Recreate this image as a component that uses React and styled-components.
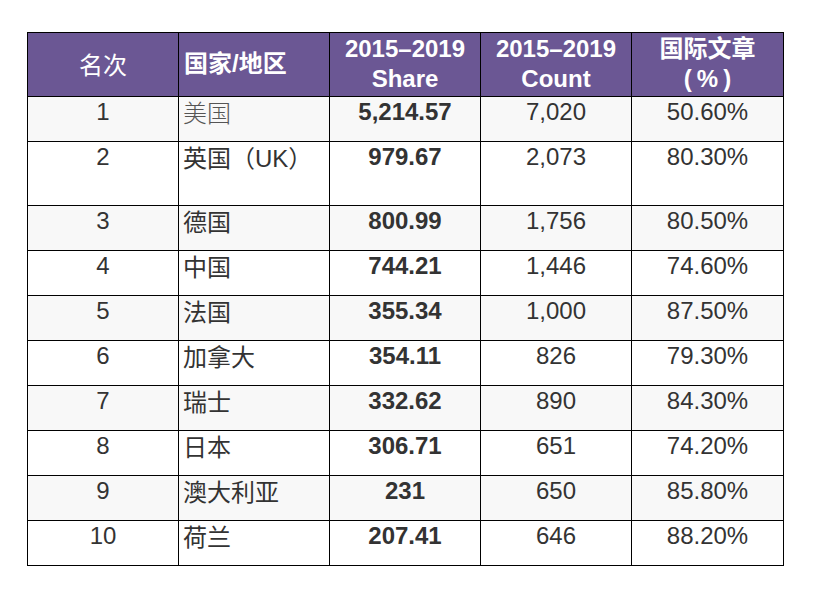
import React from "react";
import styled, { createGlobalStyle } from "styled-components";

const Global = createGlobalStyle`
  html, body { margin: 0; padding: 0; background: #ffffff; }
  body { font-family: "Liberation Sans", Arial, "Noto Sans CJK SC", sans-serif; }
`;

const Page = styled.div`
  padding: 32px 0 0 27px;
`;

const Table = styled.table`
  border-collapse: collapse;
  table-layout: fixed;
  width: 756px;
  font-family: "Liberation Sans", Arial, "Noto Sans CJK SC", sans-serif;
  font-size: 24px;
  color: #333333;
`;

const HeadRow = styled.tr`
  height: 64px;
  background: #6b5794;
`;

const Th = styled.th`
  border: 1px solid #000;
  padding: 0 2px 2px;
  color: #ffffff;
  font-weight: ${(p) => (p.$light ? 400 : 700)};
  font-family: ${(p) =>
    p.$light
      ? '"Noto Sans CJK SC", serif'
      : '"Liberation Sans", Arial, "Noto Sans CJK SC", sans-serif'};
  text-align: ${(p) => (p.$left ? "left" : "center")};
  padding-left: ${(p) => (p.$left ? "5px" : "2px")};
  line-height: 30px;
  vertical-align: middle;
`;

const Spaced = styled.span`
  letter-spacing: 5px;
  padding-left: 5px;
`;

const Row = styled.tr`
  height: ${(p) => (p.$tall ? "64px" : "45px")};
  background: ${(p) => (p.$odd ? "#f8f8f8" : "#ffffff")};
`;

const Td = styled.td`
  border: 1px solid #000;
  padding: 0 2px 0;
  line-height: 30px;
  vertical-align: top;
  text-align: center;
`;

const NameCell = styled(Td)`
  text-align: left;
  padding-left: 4px;
  font-family: "Noto Sans CJK SC", "Liberation Sans", sans-serif;
  font-weight: ${(p) => (p.$thin ? 300 : 400)};
  color: ${(p) => (p.$thin ? "#555555" : "#333333")};
  line-height: 29px;
`;

const UK = styled.span`
  font-family: "Liberation Sans", Arial, sans-serif;
`;

const ShareCell = styled(Td)`
  font-weight: 700;
`;

const rows = [
  ["1", "美国", "5,214.57", "7,020", "50.60%"],
  ["2", "英国（UK）", "979.67", "2,073", "80.30%"],
  ["3", "德国", "800.99", "1,756", "80.50%"],
  ["4", "中国", "744.21", "1,446", "74.60%"],
  ["5", "法国", "355.34", "1,000", "87.50%"],
  ["6", "加拿大", "354.11", "826", "79.30%"],
  ["7", "瑞士", "332.62", "890", "84.30%"],
  ["8", "日本", "306.71", "651", "74.20%"],
  ["9", "澳大利亚", "231", "650", "85.80%"],
  ["10", "荷兰", "207.41", "646", "88.20%"],
];

export default function App() {
  return (
    <Page>
      <Global />
      <Table>
        <colgroup>
          <col style={{ width: "151px" }} />
          <col style={{ width: "151px" }} />
          <col style={{ width: "151px" }} />
          <col style={{ width: "151px" }} />
          <col style={{ width: "152px" }} />
        </colgroup>
        <thead>
          <HeadRow>
            <Th $light>名次</Th>
            <Th $left>国家/地区</Th>
            <Th>
              2015–2019
              <br />
              Share
            </Th>
            <Th>
              2015–2019
              <br />
              Count
            </Th>
            <Th>
              国际文章
              <br />
              <Spaced>(%)</Spaced>
            </Th>
          </HeadRow>
        </thead>
        <tbody>
          {rows.map((r, i) => (
            <Row key={r[0]} $odd={i % 2 === 0} $tall={i === 1}>
              <Td>{r[0]}</Td>
              <NameCell $thin={i === 0}>
                {r[1] === "英国（UK）" ? (
                  <>
                    英国（<UK>UK</UK>）
                  </>
                ) : (
                  r[1]
                )}
              </NameCell>
              <ShareCell>{r[2]}</ShareCell>
              <Td>{r[3]}</Td>
              <Td>{r[4]}</Td>
            </Row>
          ))}
        </tbody>
      </Table>
    </Page>
  );
}
